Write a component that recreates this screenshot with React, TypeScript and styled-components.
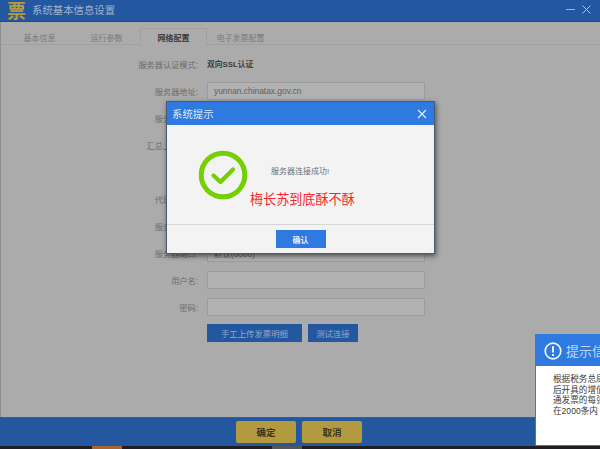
import React from "react";
import styled, { createGlobalStyle } from "styled-components";

const Global = createGlobalStyle`
  html, body { margin: 0; padding: 0; background: #1e1e24; overflow: hidden; }
  * { box-sizing: border-box; }
  body { font-family: "Liberation Sans", "Noto Sans CJK SC", sans-serif; }
`;

const Page = styled.div`
  position: relative;
  width: 600px;
  height: 449px;
  overflow: hidden;
  display: flex;
  flex-direction: column;
  background: #1e1e24;
`;
const Win = styled.div`
  height: 446px;
  display: flex;
  flex-direction: column;
  background: #ababab;
`;
const TitleBar = styled.div`
  height: 22px;
  flex: none;
  display: flex;
  align-items: center;
  background: #2358a0;
  border-bottom: 1px solid #1d4c8e;
  padding: 0 9px 2px 7px;
`;
const Logo = styled.span`
  flex: none;
  width: 19px;
  font-size: 19px;
  line-height: 20px;
  font-weight: 700;
  color: #b49a3e;
  font-family: "Noto Sans CJK SC", sans-serif;
`;
const TitleText = styled.span`
  margin-left: 6px;
  flex: 1;
  font-size: 10.4px;
  color: #9eb4d3;
`;
const WinControls = styled.div`
  display: flex;
  align-items: center;
  gap: 7px;
`;
const Content = styled.div`
  flex: 1;
  border-left: 1px solid #8f8f8f;
  display: flex;
  flex-direction: column;
`;
const Tabs = styled.div`
  display: flex;
  height: 23px;
  padding: 6px 0 0 5px;
  border-bottom: 1px solid #a0a0a0;
`;
const Tab = styled.div<{ $active?: boolean }>`
  width: 67px;
  height: ${(p) => (p.$active ? "18px" : "17px")};
  display: flex;
  align-items: center;
  justify-content: center;
  font-size: 8px;
  color: ${(p) => (p.$active ? "#3c3c3c" : "#7a7a7a")};
  font-weight: ${(p) => (p.$active ? 700 : 400)};
  background: ${(p) => (p.$active ? "#ababab" : "transparent")};
  border: 1px solid ${(p) => (p.$active ? "#a0a0a0" : "transparent")};
  border-bottom: none;
`;
const Form = styled.div`
  flex: 1;
  display: flex;
  flex-direction: column;
  padding: 5px 0 0 0;
`;
const Row = styled.div`
  height: 27px;
  display: flex;
  align-items: center;
`;
const Label = styled.div`
  width: 197px;
  text-align: right;
  font-size: 8.2px;
  color: #6b6b6b;
`;
const Value = styled.div`
  margin-left: 9px;
  font-size: 7.8px;
  font-weight: 700;
  color: #3e3e3e;
`;
const Field = styled.div`
  margin-left: 9px;
  width: 218px;
  height: 18px;
  display: flex;
  align-items: center;
  padding: 0 6px;
  background: #b1b1b1;
  border: 1px solid #9c9c9c;
  font-size: 8.4px;
  color: #606060;
`;
const Actions = styled.div`
  display: flex;
  gap: 6px;
  margin: 4px 0 0 206px;
`;
const FormButton = styled.div<{ $w: number }>`
  width: ${(p) => p.$w}px;
  height: 18px;
  display: flex;
  align-items: center;
  justify-content: center;
  background: #2358a0;
  color: #8fa9cd;
  font-size: 8.4px;
`;
const Footer = styled.div`
  flex: none;
  height: 29px;
  background: #2358a0;
  border-top: 1px solid #3a5c8d;
  display: flex;
  justify-content: center;
  align-items: center;
  gap: 6px;
  padding-right: 2px;
`;
const GoldButton = styled.div`
  width: 60px;
  height: 22px;
  display: flex;
  align-items: center;
  justify-content: center;
  background: #b49a3e;
  border-radius: 2px;
  font-size: 9.5px;
  font-weight: 700;
  color: #3a3420;
`;
const Taskbar = styled.div`
  flex: 1;
  display: flex;
  padding-left: 92px;
  gap: 0;
`;
const TaskItem = styled.div<{ $w: number; $c: string; $m: number }>`
  width: ${(p) => p.$w}px;
  margin-left: ${(p) => p.$m}px;
  background: ${(p) => p.$c};
`;
const Modal = styled.div`
  position: absolute;
  left: 166px;
  top: 101px;
  width: 269px;
  height: 153px;
  background: #f3f3f3;
  border: 1px solid #4a5a70;
  box-shadow: 1px 2px 5px rgba(0, 0, 0, 0.55);
  display: flex;
  flex-direction: column;
`;
const ModalHead = styled.div`
  height: 23px;
  flex: none;
  display: flex;
  align-items: center;
  justify-content: space-between;
  padding: 0 7px 0 5px;
  background: #2f7ae0;
  color: #dce9fa;
  font-size: 10.4px;
`;
const ModalBody = styled.div`
  flex: 1;
  display: flex;
  align-items: flex-start;
  padding: 25px 0 0 31px;
  border-bottom: 1px solid #d6d6d6;
`;
const Messages = styled.div`
  display: flex;
  flex-direction: column;
  margin-left: 23px;
`;
const Msg = styled.div`
  margin: 15px 0 0 0;
  font-size: 8px;
  color: #6f6f6f;
`;
const Red = styled.div`
  margin: 16px 0 0 -21px;
  font-size: 13.1px;
  line-height: 15px;
  color: #f8272b;
  white-space: nowrap;
`;
const ModalFoot = styled.div`
  height: 28px;
  flex: none;
  display: flex;
  align-items: center;
  justify-content: center;
`;
const BlueButton = styled.div`
  width: 50px;
  height: 18px;
  display: flex;
  align-items: center;
  justify-content: center;
  background: #2f7ae0;
  color: #e6f0fc;
  font-size: 8px;
  font-weight: 700;
`;
const Toast = styled.div`
  position: absolute;
  left: 535px;
  top: 334px;
  width: 70px;
  height: 112px;
  background: #fff;
  border: 1px solid #2f7ae0;
  display: flex;
  flex-direction: column;
`;
const ToastHead = styled.div`
  height: 31px;
  flex: none;
  display: flex;
  align-items: center;
  gap: 4px;
  padding-left: 8px;
  background: #2f7ae0;
  color: #bcd6f6;
  font-size: 13px;
  white-space: nowrap;
`;
const ToastIcon = styled.svg`
  flex: none;
`;
const ToastText = styled.div`
  margin: 8px 0 0 17px;
  width: 60px;
  font-size: 8.6px;
  line-height: 10.5px;
  color: #3a3a3a;
  white-space: nowrap;
`;

const rows: [string, string?][] = [
  ["服务器地址:", "yunnan.chinatax.gov.cn"],
  ["服务器端口:", ""],
  ["汇总上传周期:", ""],
  ["", undefined],
  ["代理服务器:", ""],
  ["服务器地址:", ""],
  ["服务器端口:", "默认(8080)"],
  ["用户名:", ""],
  ["密码:", ""],
];

export default function App() {
  return (
    <Page>
      <Global />
      <Win>
        <TitleBar>
          <Logo>票</Logo>
          <TitleText>系统基本信息设置</TitleText>
          <WinControls>
            <svg width="9" height="9" viewBox="0 0 9 9"><path d="M0 4.5H9" stroke="#9eb4d3" strokeWidth="1" /></svg>
            <svg width="9" height="9" viewBox="0 0 9 9"><path d="M0.5 0.5L8.5 8.5M8.5 0.5L0.5 8.5" stroke="#b5c5dc" strokeWidth="1" /></svg>
          </WinControls>
        </TitleBar>
        <Content>
          <Tabs>
            <Tab>基本信息</Tab>
            <Tab>运行参数</Tab>
            <Tab $active>网络配置</Tab>
            <Tab>电子发票配置</Tab>
          </Tabs>
          <Form>
            <Row>
              <Label>服务器认证模式:</Label>
              <Value>双向SSL认证</Value>
            </Row>
            {rows.map(([label, value], i) => (
              <Row key={i}>
                <Label>{label}</Label>
                {value !== undefined && <Field>{value}</Field>}
              </Row>
            ))}
            <Actions>
              <FormButton $w={95}>手工上传发票明细</FormButton>
              <FormButton $w={50}>测试连接</FormButton>
            </Actions>
          </Form>
        </Content>
        <Footer>
          <GoldButton>确定</GoldButton>
          <GoldButton>取消</GoldButton>
        </Footer>
      </Win>
      <Taskbar>
        <TaskItem $w={30} $c="#a8642c" $m={0} />
        <TaskItem $w={30} $c="#55555c" $m={150} />
      </Taskbar>
      <Modal>
        <ModalHead>
          系统提示
          <svg width="10" height="10" viewBox="0 0 10 10"><path d="M1 1L9 9M9 1L1 9" stroke="#e8f1fc" strokeWidth="1.1" /></svg>
        </ModalHead>
        <ModalBody>
          <svg width="50" height="50" viewBox="0 0 50 50">
            <circle cx="25" cy="25" r="21.8" fill="none" stroke="#74d000" strokeWidth="5" />
            <path d="M15.5 25.5L22.5 32L35 19.5" fill="none" stroke="#74d000" strokeWidth="4.2" strokeLinecap="round" strokeLinejoin="round" />
          </svg>
          <Messages>
            <Msg>服务器连接成功!</Msg>
            <Red>梅长苏到底酥不酥</Red>
          </Messages>
        </ModalBody>
        <ModalFoot>
          <BlueButton>确认</BlueButton>
        </ModalFoot>
      </Modal>
      <Toast>
        <ToastHead>
          <ToastIcon width="18" height="18" viewBox="0 0 18 18">
            <circle cx="9" cy="9" r="7.8" fill="none" stroke="#f2f7fe" strokeWidth="1.7" />
            <path d="M9 4.3V10.4M9 12V14" stroke="#f2f7fe" strokeWidth="2" />
          </ToastIcon>
          提示信息
        </ToastHead>
        <ToastText>
          根据税务总局
          <br />
          后开具的增值
          <br />
          通发票的每张
          <br />
          在2000条内
        </ToastText>
      </Toast>
    </Page>
  );
}
